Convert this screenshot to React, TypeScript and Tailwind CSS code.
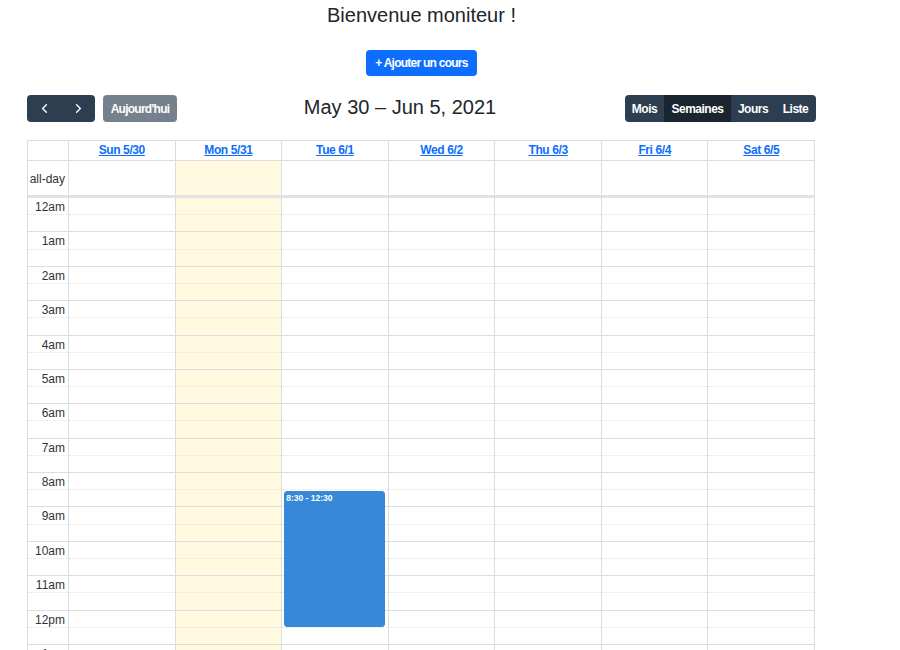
import { ChevronLeft, ChevronRight } from "lucide-react"

const days = ["Sun 5/30", "Mon 5/31", "Tue 6/1", "Wed 6/2", "Thu 6/3", "Fri 6/4", "Sat 6/5"]
const hours = ["12am", "1am", "2am", "3am", "4am", "5am", "6am", "7am", "8am", "9am", "10am", "11am",
  "12pm", "1pm", "2pm", "3pm", "4pm", "5pm", "6pm", "7pm", "8pm", "9pm", "10pm", "11pm"]

const Slots = ({ labels }: { labels?: boolean }) => (
  <div>
    {hours.map((h) => (
      <div key={h}>
        <div className="h-[17.2px] border-b border-dotted border-[#e3e3e3] text-right pr-[3px] text-[12px] leading-[19px] text-[#333]">
          {labels ? h : null}
        </div>
        <div className="h-[17.2px] border-b border-[#ddd]" />
      </div>
    ))}
  </div>
)

export default function App() {
  return (
    <div className="bg-white min-h-screen font-['Liberation_Sans',Arial,sans-serif] text-[#212529]">
      <div className="ml-[27px] w-[789px] flex flex-col">
        <h3 className="text-center text-[20px] leading-[24px] pt-[3px]">Bienvenue moniteur !</h3>

        <div className="flex justify-center mt-[23px]">
          <button className="bg-[#0d6efd] text-white text-[12px] tracking-[-0.75px] font-bold h-[26px] w-[111px] rounded-[4px]">
            + Ajouter un cours
          </button>
        </div>

        <div className="flex items-center justify-between mt-[19px] h-[27px]">
          <div className="flex items-center gap-2">
            <div className="flex bg-[#2c3e50] rounded-[4px] h-[27px] w-[68px] text-white">
              <button className="w-[34px] flex items-center justify-center">
                <ChevronLeft size={15} strokeWidth={2.25} />
              </button>
              <button className="w-[34px] flex items-center justify-center">
                <ChevronRight size={15} strokeWidth={2.25} />
              </button>
            </div>
            <button className="bg-[#2c3e50] opacity-65 text-white text-[12px] tracking-[-0.75px] font-bold h-[27px] w-[74px] rounded-[4px]">
              Aujourd'hui
            </button>
          </div>
          <h2 className="text-[20px] leading-[24px] ml-[-2px] mb-[3px]">May 30 – Jun 5, 2021</h2>
          <div className="flex bg-[#2c3e50] rounded-[4px] h-[27px] text-white text-[12px] tracking-[-0.5px] font-bold overflow-hidden">
            <button className="w-[39px]">Mois</button>
            <button className="w-[67px] bg-[#1a252f]">Semaines</button>
            <button className="w-[44px]">Jours</button>
            <button className="w-[41px]">Liste</button>
          </div>
        </div>

        <div className="mt-[18px] w-[788px] border-l border-r border-t border-[#ddd]">
          <div className="flex h-[20px] border-b border-[#ddd]">
            <div className="w-[40px] shrink-0" />
            {days.map((d) => (
              <div key={d} className="flex-1 border-l border-[#ddd] text-center text-[12px] tracking-[-0.4px] leading-[19px]">
                <a className="font-bold text-[#0d6efd] underline">{d}</a>
              </div>
            ))}
          </div>
          <div className="flex h-[37px] border-b-[3px] border-[#e2e2e2]">
            <div className="w-[40px] shrink-0 text-right pr-[3px] text-[12px] leading-[36px] text-[#333]">all-day</div>
            {days.map((d, i) => (
              <div key={d} className={`flex-1 border-l border-[#ddd] ${i === 1 ? "bg-[#fef9df]" : ""}`} />
            ))}
          </div>
          <div className="flex">
            <div className="w-[40px] shrink-0">
              <Slots labels />
            </div>
            {days.map((d, i) => (
              <div key={d} className={`flex-1 border-l border-[#ddd] relative ${i === 1 ? "bg-[#fef9df]" : ""}`}>
                <Slots />
                {i === 2 ? (
                  <div className="absolute left-[2px] right-[3px] top-[293px] h-[136px] bg-[#3788d8] border border-[#3788d8] rounded-[3px] text-white text-[8.5px] font-bold leading-[12px] px-[1px]">
                    8:30 - 12:30
                  </div>
                ) : null}
              </div>
            ))}
          </div>
        </div>
      </div>
    </div>
  )
}
